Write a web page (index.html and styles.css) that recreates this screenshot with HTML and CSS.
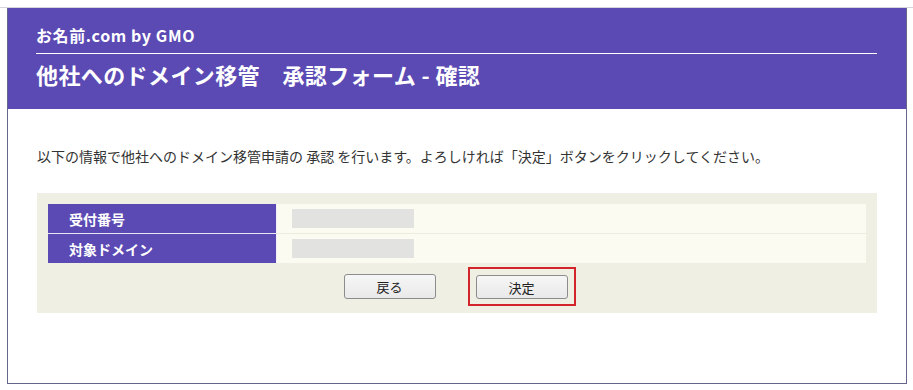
FILE: index.html
```html
<!DOCTYPE html>
<html lang="ja">
  <head>
    <meta charset="UTF-8" />
    <title>他社へのドメイン移管 承認フォーム - 確認</title>
    <link rel="stylesheet" href="styles.css">
  </head>
  <body>
    <div class="topline"></div>
    <div class="frame">
      <div class="header">
        <div class="logo">お名前.com by GMO</div>
        <h1 class="title">他社へのドメイン移管　承認フォーム - 確認</h1>
      </div>

      <div class="content">
        <p class="intro">以下の情報で他社へのドメイン移管申請の 承認 を行います。よろしければ「決定」ボタンをクリックしてください。</p>

        <div class="confirm-box">
          <table class="info-table">
            <tr>
              <th>受付番号</th>
              <td><span class="masked"></span></td>
            </tr>
            <tr>
              <th>対象ドメイン</th>
              <td><span class="masked"></span></td>
            </tr>
          </table>

          <div class="button-row">
            <button class="btn">戻る</button>
            <div class="highlight">
              <button class="btn">決定</button>
            </div>
          </div>
        </div>
      </div>
    </div>
  </body>
</html>
```

FILE: styles.css
```css
body {
  margin: 0;
  font-family: "Noto Sans CJK JP", "Noto Sans", sans-serif;
  color: #333;
  background-color: #fff;
}
.topline {
  margin-top: 7px;
  height: 1px;
  background-color: #d4d4dc;
}
.frame {
  margin-left: 7px;
  width: 898px;
  border: 1px solid #66668a;
  border-top: none;
  padding-bottom: 70px;
}
.header {
  background-color: #5b4ab4;
  color: #fff;
  padding: 15px 29px 20px 28px;
}
.logo {
  font-size: 16px;
  font-weight: bold;
  line-height: 24px;
  letter-spacing: 0.6px;
  padding-bottom: 6px;
  border-bottom: 1px solid #fff;
}
.title {
  margin: 5px 0 0;
  font-size: 22px;
  font-weight: bold;
  line-height: 30px;
  letter-spacing: 0.4px;
}
.content {
  padding: 0 29px;
}
.intro {
  margin: 37px 0 27px;
  font-size: 14px;
  line-height: 20px;
}
.confirm-box {
  background-color: #efefe3;
  padding: 11px 11px 7px;
}
.info-table {
  width: 100%;
  border-collapse: collapse;
}
.info-table th {
  width: 207px;
  height: 29px;
  padding: 0 0 0 21px;
  background-color: #5b4ab4;
  color: #fff;
  font-size: 14px;
  font-weight: bold;
  text-align: left;
  border-right: 1px solid #f2f1f8;
}
.info-table td {
  height: 29px;
  padding: 0 0 0 15px;
  background-color: #fbfbf2;
}
.info-table tr:first-child th {
  border-bottom: 1px solid #e8e6f4;
}
.info-table tr:first-child td {
  border-bottom: 1px solid #ececdf;
}
.masked {
  display: block;
  width: 122px;
  height: 19px;
  background-color: #e2e2e0;
}
.button-row {
  display: flex;
  justify-content: center;
  align-items: center;
  gap: 32px;
  margin-top: 4px;
  padding-left: 5px;
}
.highlight {
  border: 2px solid #d3242b;
  padding: 6px 6px 5px;
}
.btn {
  display: block;
  width: 92px;
  height: 25px;
  padding: 0;
  font-family: inherit;
  font-size: 13px;
  color: #222;
  background: linear-gradient(#f6f6f6, #e9e9e9);
  border: 1px solid #8c8c8c;
  border-radius: 3px;
}
.highlight .btn {
  height: 24px;
}
```
